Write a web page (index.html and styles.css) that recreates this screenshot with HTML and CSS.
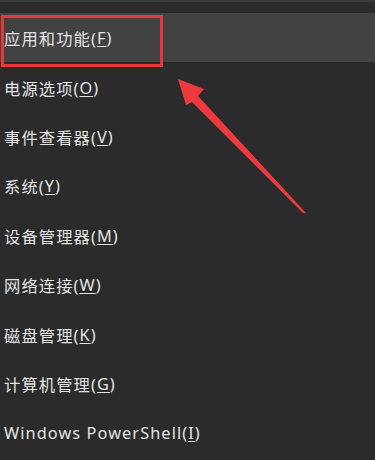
FILE: index.html
```html
<!DOCTYPE html>
<html lang="zh-CN">
<head>
<meta charset="utf-8">
<link rel="stylesheet" href="styles.css">
</head>
<body>
<div class="menu">
  <div class="item active">应用和功能(<u>F</u>)</div>
  <div class="item">电源选项(<u>O</u>)</div>
  <div class="item">事件查看器(<u>V</u>)</div>
  <div class="item">系统(<u>Y</u>)</div>
  <div class="item">设备管理器(<u>M</u>)</div>
  <div class="item">网络连接(<u>W</u>)</div>
  <div class="item">磁盘管理(<u>K</u>)</div>
  <div class="item">计算机管理(<u>G</u>)</div>
  <div class="item">Windows PowerShell(<u>I</u>)</div>
  <div class="highlight-box"></div>
  <svg class="arrow" width="375" height="460" viewBox="0 0 375 460">
    <polygon points="178,77 204,87 198,94 306,211 303,211 192,100 186,103" fill="#ee3a3f"/>
  </svg>
</div>
</body>
</html>
```
FILE: styles.css
```css
html, body {
  margin: 0;
  padding: 0;
  background: #2b2b2b;
}
.menu {
  position: relative;
  width: 375px;
  height: 460px;
  box-sizing: border-box;
  border-top: 2px solid #3a3a3a;
  padding-top: 11px;
  display: flex;
  flex-direction: column;
  overflow: hidden;
}
.item {
  height: 49.4px;
  flex: none;
  box-sizing: border-box;
  padding: 1px 0 0 4px;
  display: flex;
  align-items: center;
  font-family: "Noto Sans", "Noto Sans CJK SC", sans-serif;
  font-size: 16.3px;
  letter-spacing: 1.1px;
  color: #e4e4e4;
  white-space: nowrap;
}
.item u {
  text-decoration-thickness: 1px;
  text-underline-offset: 2px;
}
.item.active {
  background: #424242;
}
.highlight-box {
  position: absolute;
  left: 1px;
  top: 13px;
  width: 162px;
  height: 52px;
  box-sizing: border-box;
  border: 3px solid #e8363b;
}
.arrow {
  position: absolute;
  left: 0;
  top: 0;
}
```
